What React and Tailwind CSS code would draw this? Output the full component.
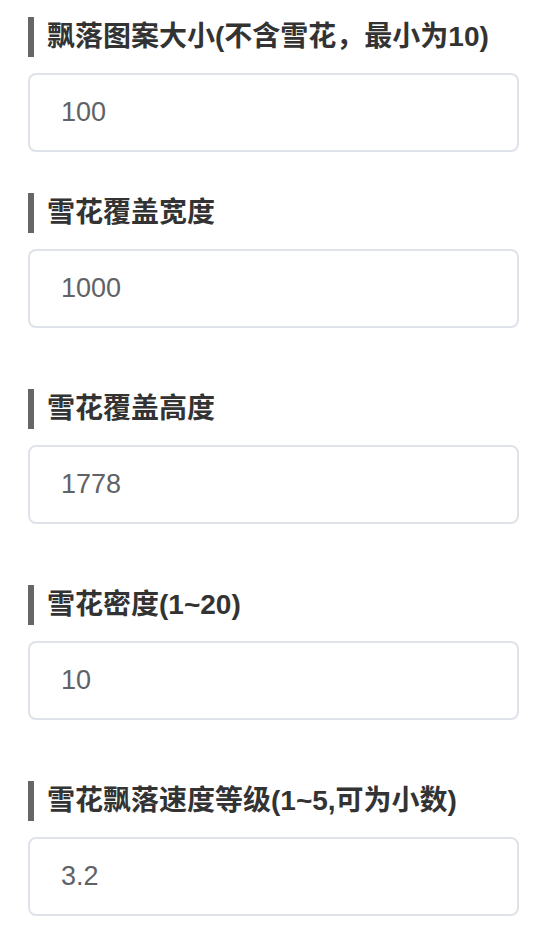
const fields = [
  { label: '飘落图案大小(不含雪花，最小为10)', value: '100', gap: 'mb-[41px]' },
  { label: '雪花覆盖宽度', value: '1000', gap: 'mb-[61px]' },
  { label: '雪花覆盖高度', value: '1778', gap: 'mb-[61px]' },
  { label: '雪花密度(1~20)', value: '10', gap: 'mb-[61px]' },
  { label: '雪花飘落速度等级(1~5,可为小数)', value: '3.2', gap: 'mb-[26px]' },
];

const Field = ({ label, value, gap }) => (
  <div className={gap}>
    <div className="flex items-center h-10">
      <span className="w-[6px] h-10 bg-[#666666]" />
      <span className="ml-[13px] text-[28px] font-bold text-[#333333] leading-10">{label}</span>
    </div>
    <div className="mt-4 h-[79px] w-[491px] border-2 border-[#dfe2e8] rounded-lg flex items-center pl-[31px]">
      <span className="text-[27px] text-[#606266]">{value}</span>
    </div>
  </div>
);

export default function App() {
  return (
    <div
      className="min-h-screen bg-white pl-[28px] pt-[17px]"
      style={{ fontFamily: '"Liberation Sans", "Noto Sans CJK SC", sans-serif' }}
    >
      {fields.map((f) => (
        <Field key={f.label} {...f} />
      ))}
    </div>
  );
}
